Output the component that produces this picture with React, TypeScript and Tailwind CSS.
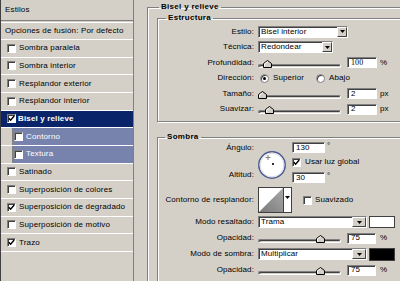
import React from "react";

// estilo hundido de los controles tipo Windows clásico
const sunken = "border border-t-[#808080] border-l-[#808080] border-b-white border-r-white shadow-[inset_1px_1px_0_#404040]";

function Check({ on }: { on?: boolean }) {
  return (
    <div className={`w-[9px] h-[9px] shrink-0 bg-white ${sunken} flex items-center justify-center`}>
      {on && (
        <svg width="7" height="7" viewBox="0 0 7 7">
          <path d="M0.8 3.2 L2.6 5.2 L6.2 1" fill="none" stroke="#000" strokeWidth="1.4" />
        </svg>
      )}
    </div>
  );
}

function Radio({ on }: { on?: boolean }) {
  return (
    <div className="w-[9px] h-[9px] shrink-0 rounded-full bg-white border border-[#808080] shadow-[inset_1px_1px_0_#404040] flex items-center justify-center">
      {on && <div className="w-[3px] h-[3px] rounded-full bg-black" />}
    </div>
  );
}

function Arrow() {
  return (
    <svg width="5" height="3" viewBox="0 0 5 3">
      <path d="M0 0h5L2.5 3z" fill="#000" />
    </svg>
  );
}

function Select({ text, className, btn }: { text: string; className: string; btn: string }) {
  return (
    <div className={`${className} h-[12px] shrink-0 bg-white ${sunken} flex items-center`}>
      <span className="flex-1 pl-[2px] truncate">{text}</span>
      <div className={`${btn} h-full bg-[#d4d0c8] border border-t-white border-l-white border-b-[#404040] border-r-[#404040] flex items-center justify-center`}>
        <Arrow />
      </div>
    </div>
  );
}

function Field({ className, children }: { className: string; children: React.ReactNode }) {
  return <div className={`${className} h-[11px] shrink-0 bg-white ${sunken} flex items-center pl-[3px]`}>{children}</div>;
}

function Slider({ thumb }: { thumb: string }) {
  return (
    <div className="relative w-[83px] h-[8px] mt-[2px] shrink-0 flex items-end">
      <div className={`w-full h-[4px] rounded-[2px] bg-[#d4d0c8] ${sunken}`} />
      <svg className={`absolute bottom-0 ${thumb}`} width="9" height="8" viewBox="0 0 9 8">
        <path d="M0.5 7.5V3.5L4.5 0.5L8.5 3.5V7.5Z" fill="#d4d0c8" stroke="#000" />
        <path d="M1.5 6.5V4L4.5 1.7" fill="none" stroke="#fff" />
      </svg>
    </div>
  );
}

function Label({ children }: { children: React.ReactNode }) {
  return <span className="w-[96px] shrink-0 text-right mr-[4px]">{children}</span>;
}

function Row({ label, on }: { label: string; on?: boolean }) {
  return (
    <div className="h-[17.67px] flex items-center border-b border-white pl-[6px] gap-[3px]">
      <Check on={on} />
      <span>{label}</span>
    </div>
  );
}

function SubRow({ label }: { label: string }) {
  return (
    <div className="h-[17.67px] flex border-b border-white">
      <div className="w-[12px] border-r border-[#808080]" />
      <div className="flex-1 bg-[#7783ad] text-white flex items-center pl-[1px] gap-[3px]">
        <Check />
        <span>{label}</span>
      </div>
    </div>
  );
}

const group = "border border-[#808080] shadow-[inset_1px_1px_0_#fff,1px_1px_0_#fff]";

export default function App() {
  return (
    <div className="w-[400px] h-[281px] overflow-hidden bg-[#d4d0c8] flex text-[8px] leading-[10px] text-black font-['Liberation_Sans',Arial,sans-serif]">
      {/* lista de estilos */}
      <div className="w-[134px] shrink-0 border-l border-r border-l-[#404040] border-r-[#808080] flex flex-col tracking-[0.15px]">
        <div className="h-[20px] flex items-center pl-[4px]">Estilos</div>
        <div className="h-[3px] border-t border-[#808080] border-b border-b-white" />
        <div className="h-[17px] flex items-center pl-[4px] border-b border-white whitespace-nowrap">Opciones de fusión: Por defecto</div>
        <Row label="Sombra paralela" />
        <Row label="Sombra interior" />
        <Row label="Resplandor exterior" />
        <Row label="Resplandor interior" />
        <div className="h-[17.67px] flex items-center border-b border-white pl-[6px] gap-[2px] bg-[#0a246a] text-white font-bold">
          <Check on />
          <span>Bisel y relieve</span>
        </div>
        <SubRow label="Contorno" />
        <SubRow label="Textura" />
        <Row label="Satinado" />
        <Row label="Superposición de colores" />
        <Row label="Superposición de degradado" on />
        <Row label="Superposición de motivo" />
        <Row label="Trazo" on />
        <div className="flex-1" />
      </div>

      {/* panel derecho */}
      <div className="flex-1 min-w-0 pt-[2px] pl-[13px] tracking-[0.1px]">
        <fieldset className={`w-[300px] h-[300px] ${group} px-[9px]`}>
          <legend className="ml-[2px] px-[2px] font-bold leading-[10px] tracking-[0.3px]">Bisel y relieve</legend>

          <fieldset className={`mt-[1px] w-[280px] ${group} pt-[1px] pb-[4px]`}>
            <legend className="ml-[8px] px-[2px] font-bold leading-[10px] tracking-[0.3px]">Estructura</legend>
            <div className="h-[15.5px] flex items-center">
              <Label>Estilo:</Label>
              <Select text="Bisel interior" className="w-[90px]" btn="w-[10px]" />
            </div>
            <div className="h-[15.5px] flex items-center">
              <Label>Técnica:</Label>
              <Select text="Redondear" className="w-[75px]" btn="w-[10px]" />
            </div>
            <div className="h-[15.5px] flex items-center">
              <Label>Profundidad:</Label>
              <Slider thumb="left-[5px]" />
              <Field className="ml-[6px] w-[30px]">
                <span className="font-['Liberation_Serif',serif]">100</span>
              </Field>
              <span className="ml-[3px]">%</span>
            </div>
            <div className="h-[15.5px] flex items-center">
              <Label>Dirección:</Label>
              <span className="ml-[2px]"><Radio on /></span>
              <span className="ml-[4px]">Superior</span>
              <span className="ml-[12px]"><Radio /></span>
              <span className="ml-[4px]">Abajo</span>
            </div>
            <div className="h-[15.5px] flex items-center">
              <Label>Tamaño:</Label>
              <Slider thumb="left-0" />
              <Field className="ml-[6px] w-[30px]">2</Field>
              <span className="ml-[3px]">px</span>
            </div>
            <div className="h-[15.5px] flex items-center">
              <Label>Suavizar:</Label>
              <Slider thumb="left-[7px]" />
              <Field className="ml-[6px] w-[30px]">2</Field>
              <span className="ml-[3px]">px</span>
            </div>
          </fieldset>

          <fieldset className={`mt-[10px] w-[280px] h-[200px] ${group}`}>
            <legend className="ml-[7px] px-[2px] font-bold leading-[10px] tracking-[0.3px]">Sombra</legend>

            <div className="flex h-[43px]">
              <div className="w-[96px] shrink-0 flex flex-col justify-between items-end pt-[1px] pb-[5px] mr-[4px]">
                <span>Ángulo:</span>
                <span>Altitud:</span>
              </div>
              <svg className="mt-[9px] shrink-0" width="28" height="28" viewBox="0 0 28 28">
                <circle cx="14" cy="14" r="13.2" fill="#fff" stroke="#4b5a94" strokeWidth="1.5" />
                <circle cx="14" cy="14" r="11.8" fill="none" stroke="#dcdcdc" strokeWidth="1" />
                <path d="M7.5 6.5h5M10 4v5" stroke="#808080" strokeWidth="1" />
                <circle cx="15" cy="13" r="1.1" fill="#000" />
              </svg>
              <div className="ml-[6px] flex flex-col">
                <div className="flex items-start">
                  <Field className="w-[33px]">130</Field>
                  <span className="ml-[2px] -mt-[1px]">°</span>
                </div>
                <div className="mt-[4px] h-[10px] flex items-center gap-[4px]">
                  <Check on />
                  <span>Usar luz global</span>
                </div>
                <div className="mt-[5px] flex items-start">
                  <Field className="w-[33px]">30</Field>
                  <span className="ml-[2px] -mt-[1px]">°</span>
                </div>
              </div>
            </div>

            <div className="mt-[2px] h-[26px] flex items-center">
              <Label>Contorno de resplandor:</Label>
              <div className="w-[34px] h-[26px] shrink-0 border border-[#404040] flex bg-white">
                <svg className="shrink-0" width="24" height="24" viewBox="0 0 24 24">
                  <defs>
                    <linearGradient id="cg" x1="0" y1="1" x2="1" y2="0">
                      <stop offset="0" stopColor="#7a7a7a" />
                      <stop offset="1" stopColor="#a8a8a8" />
                    </linearGradient>
                  </defs>
                  <rect width="24" height="24" fill="#fff" />
                  <path d="M0 24L24 0V24Z" fill="url(#cg)" />
                </svg>
                <div className="flex-1 border-l border-[#404040] flex justify-center pt-[8px]">
                  <Arrow />
                </div>
              </div>
              <span className="ml-[11px]"><Check /></span>
              <span className="ml-[3px]">Suavizado</span>
            </div>

            <div className="mt-[1px] h-[16px] flex items-center">
              <Label>Modo resaltado:</Label>
              <Select text="Trama" className="w-[109px]" btn="w-[14px]" />
              <div className="ml-[2px] w-[26px] h-[12px] shrink-0 bg-white border border-[#404040]" />
            </div>
            <div className="h-[16px] flex items-center">
              <Label>Opacidad:</Label>
              <Slider thumb="left-[58px]" />
              <Field className="ml-[6px] w-[29px]">75</Field>
              <span className="ml-[4px]">%</span>
            </div>
            <div className="h-[16px] flex items-center">
              <Label>Modo de sombra:</Label>
              <Select text="Multiplicar" className="w-[109px]" btn="w-[14px]" />
              <div className="ml-[2px] w-[26px] h-[13px] shrink-0 bg-black border border-[#404040]" />
            </div>
            <div className="h-[16px] flex items-center">
              <Label>Opacidad:</Label>
              <Slider thumb="left-[58px]" />
              <Field className="ml-[6px] w-[29px]">75</Field>
              <span className="ml-[4px]">%</span>
            </div>
          </fieldset>
        </fieldset>
      </div>
    </div>
  );
}
